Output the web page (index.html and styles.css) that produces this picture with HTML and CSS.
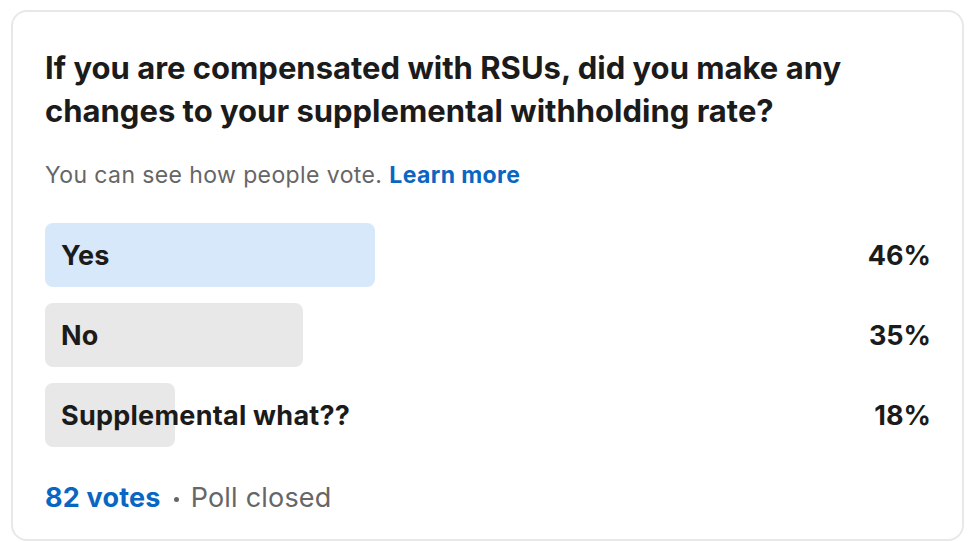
FILE: index.html
```html
<!DOCTYPE html>
<html lang="en">
<head>
    <meta charset="UTF-8">
    <meta name="viewport" content="width=device-width, initial-scale=1.0">
    <title>Poll</title>
    <link rel="stylesheet" href="styles.css">
</head>
<body>
    <div class="card">
        <h2 class="question">If you are compensated with RSUs, did you make any changes to your supplemental withholding rate?</h2>
        <p class="note">You can see how people vote. <a href="#">Learn more</a></p>
        <div class="options">
            <div class="row">
                <div class="option">
                    <div class="fill mine" style="width: 46.3%"></div>
                    <span class="label">Yes</span>
                </div>
                <span class="pct">46%</span>
            </div>
            <div class="row">
                <div class="option">
                    <div class="fill" style="width: 36.2%"></div>
                    <span class="label">No</span>
                </div>
                <span class="pct">35%</span>
            </div>
            <div class="row">
                <div class="option">
                    <div class="fill" style="width: 18.3%"></div>
                    <span class="label">Supplemental what??</span>
                </div>
                <span class="pct">18%</span>
            </div>
        </div>
        <div class="meta">
            <a href="#">82 votes</a>
            <span class="dot"></span>
            <span>Poll closed</span>
        </div>
    </div>
</body>
</html>
```

FILE: styles.css
```css
body {
    font-family: Inter, "Noto Sans", sans-serif;
    margin: 0;
    padding: 0;
    background-color: #fff;
    color: #1b1b1b;
}
.card {
    margin: 10px 6px 0 11px;
    height: 531px;
    box-sizing: border-box;
    border: 2px solid #e8e8e8;
    border-radius: 16px;
    padding: 34px 31px 0 32px;
}
.question {
    font-size: 31px;
    font-weight: 700;
    line-height: 43px;
    margin: 0;
}
.note {
    font-size: 23px;
    letter-spacing: 0.4px;
    color: #666;
    margin: 28px 0 0;
    line-height: 30px;
}
.note a {
    color: #0a66c2;
    font-weight: 700;
    text-decoration: none;
}
.options {
    display: flex;
    flex-direction: column;
    gap: 16px;
    margin-top: 33px;
}
.row {
    display: flex;
    align-items: center;
}
.option {
    flex: 1;
    display: grid;
    align-items: center;
    height: 64px;
}
.fill,
.label {
    grid-area: 1 / 1;
}
.fill {
    height: 100%;
    border-radius: 8px;
    background-color: #e8e8e8;
}
.fill.mine {
    background-color: #d7e8fb;
}
.label {
    padding-left: 16px;
    font-size: 27px;
    letter-spacing: 0.25px;
    font-weight: 700;
}
.pct {
    width: 174px;
    text-align: right;
    font-size: 27px;
    font-weight: 700;
}
.meta {
    margin-top: 33px;
    font-size: 27px;
    line-height: 36px;
    letter-spacing: 0.2px;
    color: #666;
    display: flex;
    align-items: center;
}
.meta a {
    color: #0a66c2;
    font-weight: 700;
    text-decoration: none;
}
.dot {
    width: 5px;
    height: 5px;
    border-radius: 50%;
    background-color: #666;
    margin: 2px 12px 0 13px;
}
```
